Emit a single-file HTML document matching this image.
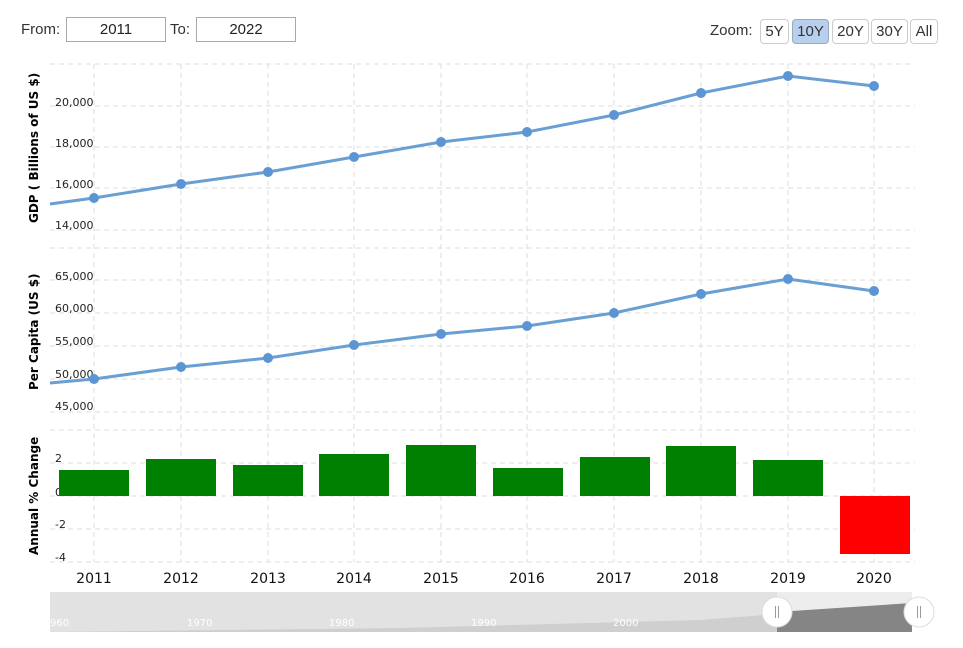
<!DOCTYPE html>
<html><head><meta charset="utf-8"><style>
html,body{margin:0;padding:0;background:#fff;width:963px;height:648px;overflow:hidden;font-family:"Liberation Sans",sans-serif}
.t{position:absolute;font-size:15px;color:#333}
.in{position:absolute;top:17px;height:25px;border:1px solid #aaa;box-sizing:border-box;text-align:center;font-size:15px;line-height:24px;color:#222}
.b{position:absolute;top:19px;height:25px;border:1px solid #ccc;border-radius:4px;box-sizing:border-box;font-size:15px;line-height:23px;text-align:center;color:#333;background:#fff}
</style></head><body>
<div class="t" style="left:21px;top:21px">From:</div>
<div class="in" style="left:66px;width:100px">2011</div>
<div class="t" style="left:170px;top:21px">To:</div>
<div class="in" style="left:196px;width:100px">2022</div>
<div class="t" style="left:710px;top:22px">Zoom:</div>
<div class="b" style="left:760px;width:29px">5Y</div>
<div class="b" style="left:792px;width:37px;background:#b9cfee;border-color:#9ab">10Y</div>
<div class="b" style="left:832px;width:37px">20Y</div>
<div class="b" style="left:871px;width:37px">30Y</div>
<div class="b" style="left:910px;width:28px">All</div>
<svg width="963" height="648" style="position:absolute;left:0;top:0" font-family="DejaVu Sans, sans-serif">
<g stroke="#ddd" stroke-dasharray="5,4" stroke-width="1">
<line x1="50" y1="64" x2="915" y2="64"/><line x1="50" y1="106" x2="915" y2="106"/><line x1="50" y1="147" x2="915" y2="147"/><line x1="50" y1="188" x2="915" y2="188"/><line x1="50" y1="230" x2="915" y2="230"/>
<line x1="50" y1="248" x2="915" y2="248"/><line x1="50" y1="280" x2="915" y2="280"/><line x1="50" y1="313" x2="915" y2="313"/><line x1="50" y1="346" x2="915" y2="346"/><line x1="50" y1="379" x2="915" y2="379"/><line x1="50" y1="412" x2="915" y2="412"/>
<line x1="50" y1="430" x2="915" y2="430"/><line x1="50" y1="463" x2="915" y2="463"/><line x1="50" y1="496" x2="915" y2="496"/><line x1="50" y1="529" x2="915" y2="529"/><line x1="50" y1="562" x2="915" y2="562"/>
<g>
<line x1="94" y1="64" x2="94" y2="562"/><line x1="181" y1="64" x2="181" y2="562"/><line x1="268" y1="64" x2="268" y2="562"/><line x1="354" y1="64" x2="354" y2="562"/><line x1="441" y1="64" x2="441" y2="562"/><line x1="527" y1="64" x2="527" y2="562"/><line x1="614" y1="64" x2="614" y2="562"/><line x1="701" y1="64" x2="701" y2="562"/><line x1="788" y1="64" x2="788" y2="562"/><line x1="874" y1="64" x2="874" y2="562"/>
</g></g>
<g font-size="11" fill="#222">
<text x="55" y="106">20,000</text><text x="55" y="147">18,000</text><text x="55" y="188">16,000</text><text x="55" y="229">14,000</text>
<text x="55" y="280">65,000</text><text x="55" y="312">60,000</text><text x="55" y="345">55,000</text><text x="55" y="378">50,000</text><text x="55" y="410">45,000</text>
<text x="55" y="462">2</text><text x="55" y="496">0</text><text x="55" y="528">-2</text><text x="55" y="561">-4</text>
</g>
<g font-size="12" font-weight="bold" fill="#000">
<text transform="translate(38,223) rotate(-90)">GDP ( Billions of US $)</text>
<text transform="translate(38,390) rotate(-90)">Per Capita (US $)</text>
<text transform="translate(38,555) rotate(-90)">Annual % Change</text>
</g>
<g fill="#008000">
<rect x="59" y="470" width="70" height="26"/><rect x="146" y="459" width="70" height="37"/><rect x="233" y="465" width="70" height="31"/><rect x="319" y="454" width="70" height="42"/><rect x="406" y="445" width="70" height="51"/><rect x="493" y="468" width="70" height="28"/><rect x="580" y="457" width="70" height="39"/><rect x="666" y="446" width="70" height="50"/><rect x="753" y="460" width="70" height="36"/>
</g>
<rect x="840" y="496" width="70" height="58" fill="#f00"/>
<g fill="none" stroke="#6a9fd4" stroke-width="3">
<polyline points="50,204 94,198 181,184 268,172 354,157 441,142 527,132 614,115 701,93 788,76 874,86"/>
<polyline points="50,383 94,379 181,367 268,358 354,345 441,334 527,326 614,313 701,294 788,279 874,291"/>
</g>
<g fill="#5b95d3">
<circle cx="94" cy="198" r="5"/><circle cx="181" cy="184" r="5"/><circle cx="268" cy="172" r="5"/><circle cx="354" cy="157" r="5"/><circle cx="441" cy="142" r="5"/><circle cx="527" cy="132" r="5"/><circle cx="614" cy="115" r="5"/><circle cx="701" cy="93" r="5"/><circle cx="788" cy="76" r="5"/><circle cx="874" cy="86" r="5"/>
<circle cx="94" cy="379" r="5"/><circle cx="181" cy="367" r="5"/><circle cx="268" cy="358" r="5"/><circle cx="354" cy="345" r="5"/><circle cx="441" cy="334" r="5"/><circle cx="527" cy="326" r="5"/><circle cx="614" cy="313" r="5"/><circle cx="701" cy="294" r="5"/><circle cx="788" cy="279" r="5"/><circle cx="874" cy="291" r="5"/>
</g>
<g font-size="14" fill="#111" text-anchor="middle">
<text x="94" y="583">2011</text><text x="181" y="583">2012</text><text x="268" y="583">2013</text><text x="354" y="583">2014</text><text x="441" y="583">2015</text><text x="527" y="583">2016</text><text x="614" y="583">2017</text><text x="701" y="583">2018</text><text x="788" y="583">2019</text><text x="874" y="583">2020</text>
</g>
<rect x="50" y="592" width="862" height="40" fill="#e2e2e2"/>
<polygon points="50,632 400,628 700,620 777,614 777,632" fill="#cfcfcf"/>
<rect x="777" y="592" width="135" height="40" fill="#ededed"/>
<polygon points="777,612 912,603 912,632 777,632" fill="#858585"/>
<g font-size="10" fill="#fff"><text x="50" y="626">960</text><text x="187" y="626">1970</text><text x="329" y="626">1980</text><text x="471" y="626">1990</text><text x="613" y="626">2000</text></g>
<g stroke="#ddd"><circle cx="777" cy="612" r="15" fill="#fff"/><circle cx="919" cy="612" r="15" fill="#fff"/></g>
<g stroke="#999" stroke-width="1"><line x1="775.5" y1="606" x2="775.5" y2="618"/><line x1="778.5" y1="606" x2="778.5" y2="618"/><line x1="917.5" y1="606" x2="917.5" y2="618"/><line x1="920.5" y1="606" x2="920.5" y2="618"/></g>
</svg>
</body></html>
